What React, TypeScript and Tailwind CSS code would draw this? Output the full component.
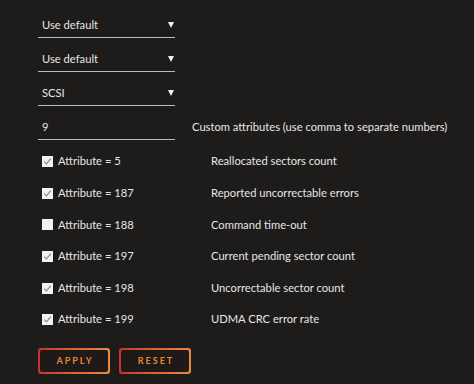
import React from 'react'

const selects = ['Use default', 'Use default', 'SCSI']

const attrs = [
  { id: 5, on: true, desc: 'Reallocated sectors count' },
  { id: 187, on: true, desc: 'Reported uncorrectable errors' },
  { id: 188, on: false, desc: 'Command time-out' },
  { id: 197, on: true, desc: 'Current pending sector count' },
  { id: 198, on: true, desc: 'Uncorrectable sector count' },
  { id: 199, on: true, desc: 'UDMA CRC error rate' },
]

function Box({ on }: { on: boolean }) {
  return (
    <span className="flex h-[11px] w-[11px] shrink-0 items-center justify-center bg-[#f2f2f2]">
      {on && (
        <svg width="9" height="9" viewBox="0 0 9 9">
          <path d="M1.2 4.6 L3.4 6.9 L7.9 1.6" fill="none" stroke="#8a8a8a" strokeWidth="1.2" />
        </svg>
      )}
    </span>
  )
}

function Btn({ label }: { label: string }) {
  return (
    <div className="rounded-[3px] bg-gradient-to-r from-[#c9302c] to-[#e88a3c] p-[2px]">
      <button className="flex h-[22px] w-[68px] items-center justify-center rounded-[2px] bg-[#1e1a1a] pl-[2px] text-[9px] font-bold tracking-[0.22em] text-[#e8862f]">
        {label}
      </button>
    </div>
  )
}

export default function App() {
  return (
    <div className="h-[384px] w-[474px] bg-[#1e1b1b] pl-[38px] pt-[13px] text-[11.2px] text-[#e6e6e6]" style={{ fontFamily: 'Lato, "Liberation Sans", sans-serif' }}>
      {selects.map((s, i) => (
        <div key={i} className="mb-[9px] flex h-[25px] w-[137px] items-center justify-between border-b border-[#bdbdbd] pl-[4px] pr-[1px]">
          <span className="pt-[1px]">{s}</span>
          <svg width="6" height="6" viewBox="0 0 6 6"><path d="M0 0 H6 L3 6 Z" fill="#f0f0f0" /></svg>
        </div>
      ))}
      <div className="flex items-center">
        <div className="flex h-[25px] w-[137px] shrink-0 items-center border-b border-[#bdbdbd] pl-[4px] pt-[1px]">9</div>
        <span className="ml-[17px] whitespace-nowrap pb-[1px]">Custom attributes (use comma to separate numbers)</span>
      </div>
      <div className="mt-[6px]">
        {attrs.map(a => (
          <div key={a.id} className="flex h-[31.6px] items-center">
            <div className="flex w-[173px] items-center pl-[4px]">
              <Box on={a.on} />
              <span className="ml-[5px]">Attribute = {a.id}</span>
            </div>
            <span>{a.desc}</span>
          </div>
        ))}
      </div>
      <div className="mt-[12px] flex gap-[9px]">
        <Btn label="APPLY" />
        <Btn label="RESET" />
      </div>
    </div>
  )
}
